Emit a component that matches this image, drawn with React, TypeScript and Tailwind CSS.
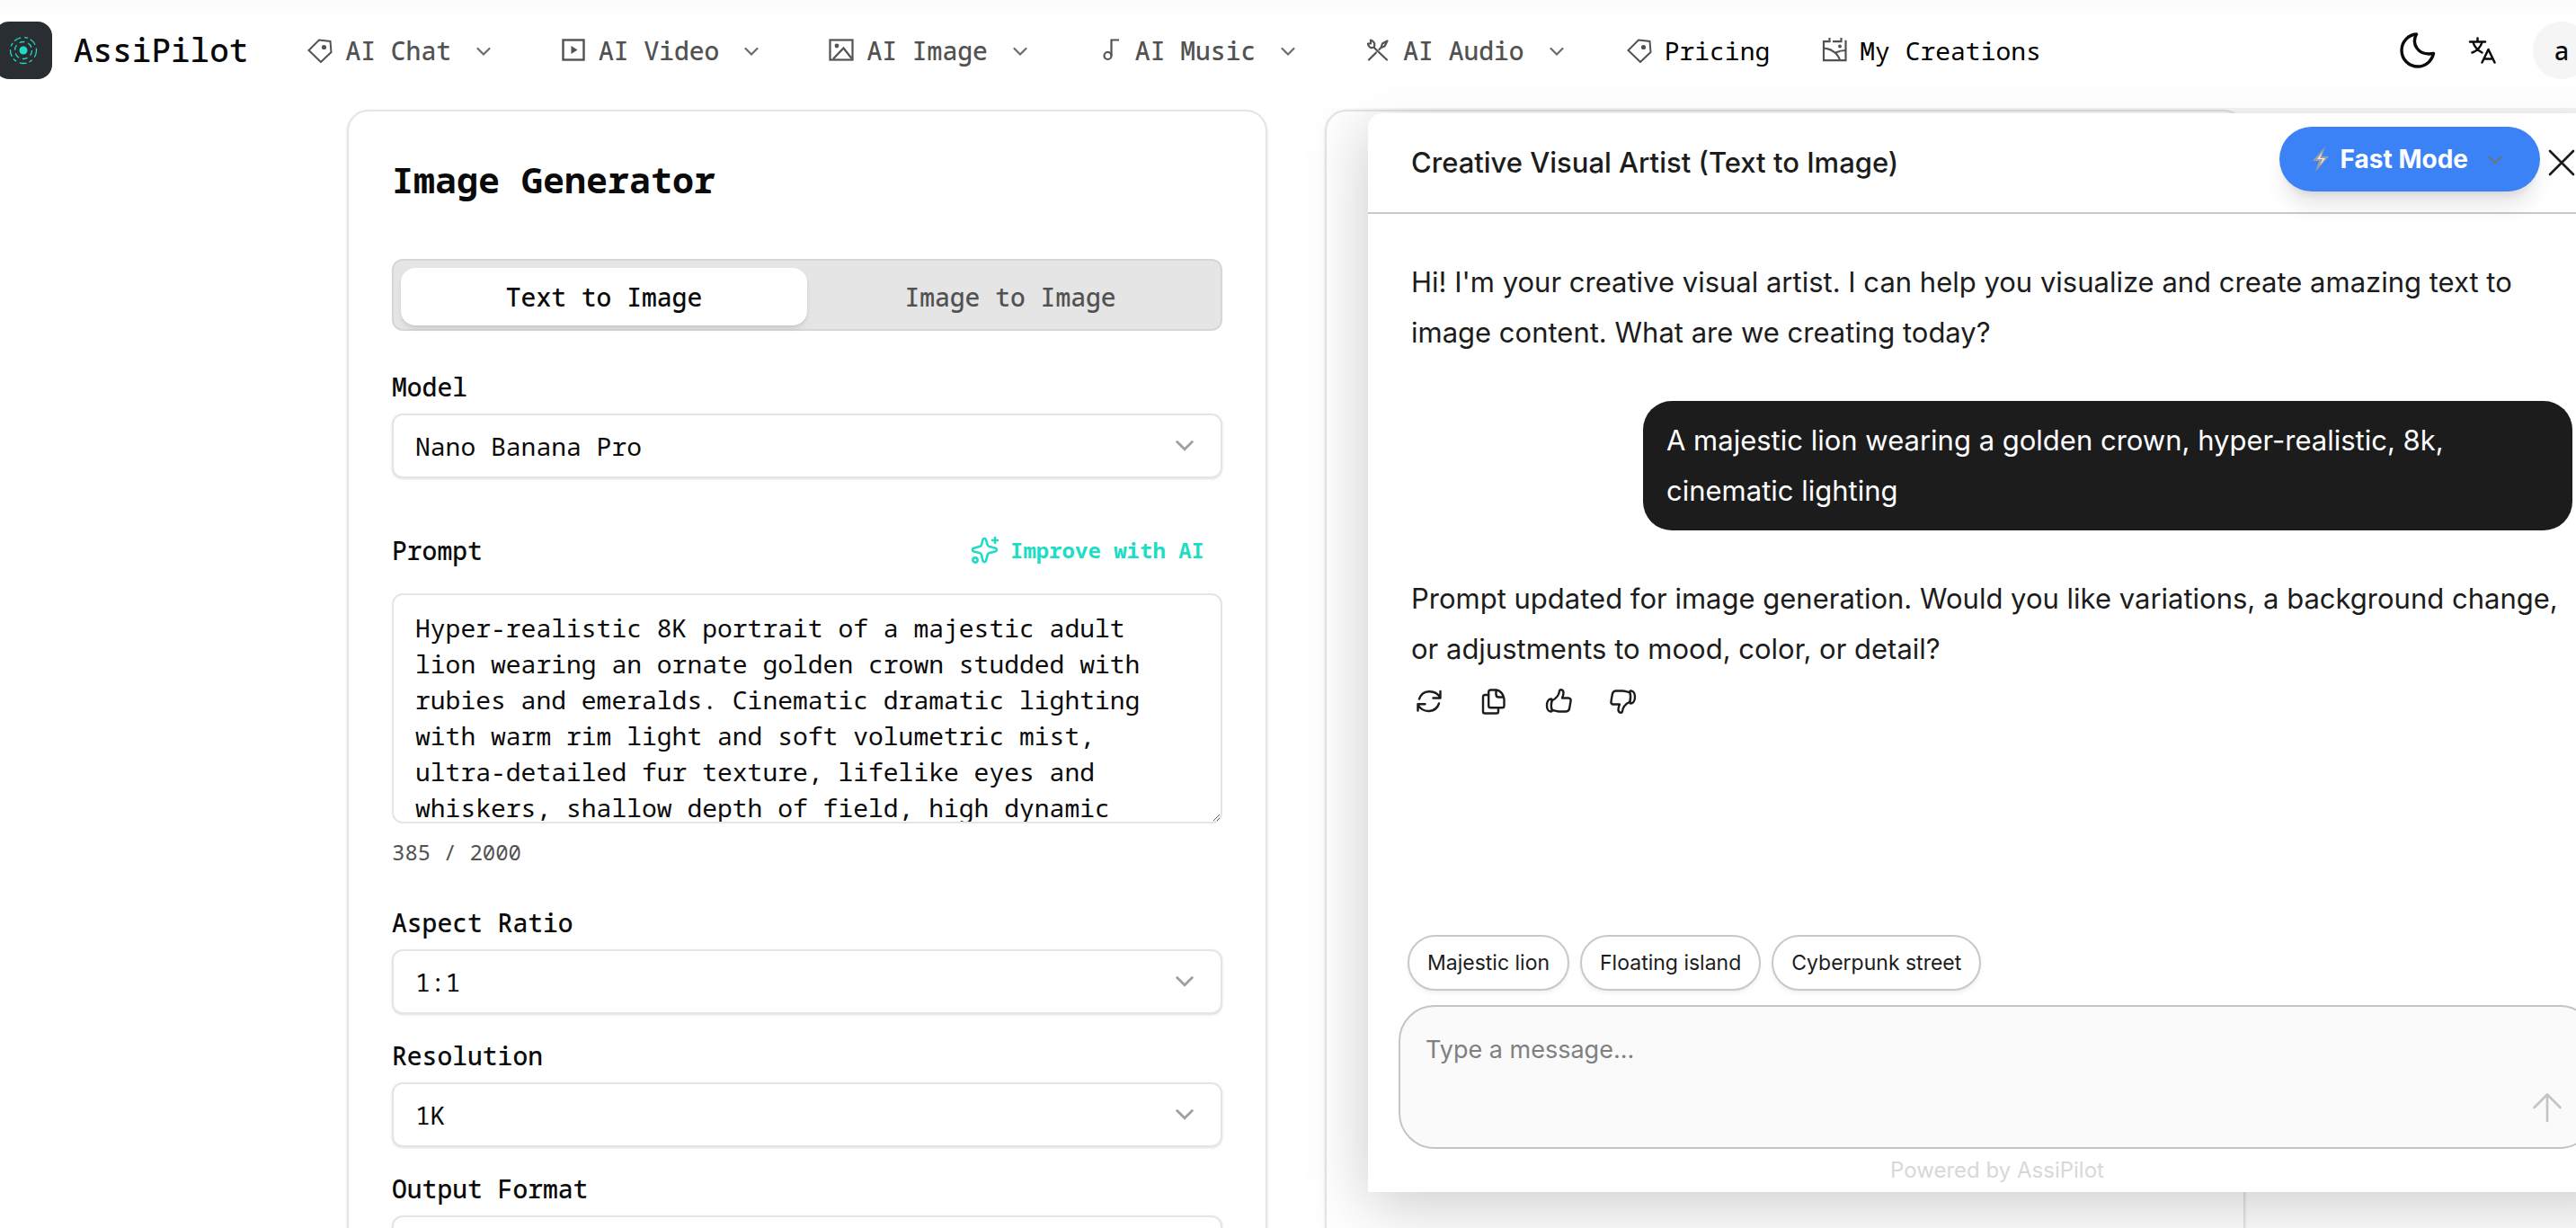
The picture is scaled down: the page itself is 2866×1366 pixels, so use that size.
import React from "react";

type IconProps = { className?: string };

const TagIcon = ({ className = "size-7" }: IconProps) => (
  <svg viewBox="0 0 28 28" fill="none" stroke="currentColor" strokeWidth="2" className={className}>
    <path d="M1.5 14 13 2.500 25.500 4 26.500 16 15 27Z" />
    <circle cx="18.500" cy="10.500" r="2.600" fill="currentColor" stroke="none" />
  </svg>
);

const VideoIcon = () => (
  <svg viewBox="0 0 28 28" fill="none" stroke="currentColor" strokeWidth="2.400" className="size-7">
    <rect x="2.500" y="2.500" width="23" height="22" />
    <path d="M11.500 9v9l7-4.500Z" fill="currentColor" stroke="none" />
  </svg>
);

const PictureIcon = () => (
  <svg viewBox="0 0 28 28" fill="none" stroke="currentColor" strokeWidth="2.200" className="size-7">
    <rect x="1.500" y="2.500" width="25" height="22" />
    <circle cx="9" cy="9" r="2.400" fill="currentColor" stroke="none" />
    <path d="m5 23.500 11.500-12 9 11.500" />
  </svg>
);

const MusicIcon = () => (
  <svg viewBox="0 0 28 28" fill="none" stroke="currentColor" strokeWidth="2.200" className="size-7">
    <path d="M24 2.500h-8.500V20" />
    <circle cx="11.500" cy="20" r="4" />
  </svg>
);

const ToolsIcon = () => (
  <svg viewBox="0 0 28 28" fill="none" stroke="currentColor" strokeWidth="2.200" strokeLinecap="round" strokeLinejoin="round" className="size-7">
    <path d="M6 2.500v4H3c0 3.500 3 5.500 6.500 4.200L24 24.500M9.500 10.700C11.500 7 9.500 3.500 6 2.500" />
    <path d="M24.500 3.500 19 6.500l-1.500 4.500 4-1.500ZM17.500 11l-2 2M12 16.500l-8 8" />
  </svg>
);

const CreationsIcon = () => (
  <svg viewBox="0 0 28 28" fill="none" stroke="currentColor" strokeWidth="2.200" className="size-7">
    <path d="M8.500 0v4.200H2v21h24.500V2.800M12 4.200h9.500V0" />
    <path d="M2 11.500c9 1 16 6 18 13.500M15.500 16.500c3-1.500 6.500-2.500 11-2.500" />
    <circle cx="20" cy="9.500" r="2" fill="currentColor" stroke="none" />
  </svg>
);

const Chevron = ({ className = "size-7" }: IconProps) => (
  <svg viewBox="0 0 28 28" fill="none" stroke="currentColor" strokeWidth="2.200" strokeLinecap="round" className={className} aria-hidden="true">
    <path d="m7.500 12 6.500 6.500 6.500-6.500" />
  </svg>
);

const MoonIcon = () => (
  <svg viewBox="0 0 44 44" fill="none" stroke="currentColor" strokeWidth="3.400" strokeLinejoin="round" className="size-11">
    <path d="M20.500 4C15 14 21 28.500 39.500 25.500 37.500 34 30.500 40 22 40 12 40 4 32 4 22 4 12.500 11.500 4.500 20.500 4Z" />
  </svg>
);

const TranslateIcon = () => (
  <svg viewBox="0 0 32 32" fill="none" stroke="currentColor" strokeWidth="2.500" strokeLinecap="round" strokeLinejoin="round" className="size-8">
    <path d="M2 6.500h17M10.500 2.500v4M5.500 7c1.500 5 5 9 10 11.500M15.500 7C14 12 10 16.500 4.500 18.500M15.500 29.500 22.500 15l7 14.500M18 25.500h9" />
  </svg>
);

const SparklesIcon = () => (
  <svg viewBox="0 0 32 32" fill="none" stroke="currentColor" strokeWidth="2.600" strokeLinecap="round" strokeLinejoin="round" className="size-8">
    <path d="M13.500 4.500c.6-2 3-2 3.600 0l1.400 5.200c.3 1.200 1.200 2.100 2.400 2.400l6.500 1.700c2 .6 2 3 0 3.600l-6.500 1.700c-1.200.3-2.100 1.200-2.400 2.400l-1.400 6.200c-.6 2-3 2-3.600 0l-1.400-6.200c-.3-1.200-1.200-2.100-2.400-2.400l-6.200-1.700c-2-.6-2-3 0-3.600l6.200-1.700c1.200-.3 2.100-1.200 2.400-2.400Z" />
    <path d="M27 2v6M24 5h6" />
    <circle cx="5" cy="27" r="2.600" />
  </svg>
);

const RefreshIcon = () => (
  <svg viewBox="0 0 32 32" fill="none" stroke="currentColor" strokeWidth="2.400" strokeLinecap="round" strokeLinejoin="round" className="size-8">
    <path d="M5 13.500C8.500 3 22.500 2.500 28.500 12M28.500 5v7.500h-8M27 18.500C23.500 29 9.500 30 3.500 20M3.500 26.500v-7.300h8" />
  </svg>
);

const CopyIcon = () => (
  <svg viewBox="0 0 32 32" fill="none" stroke="currentColor" strokeWidth="2.400" strokeLinecap="round" strokeLinejoin="round" className="size-8">
    <path d="M12.500 3.500h6.500c4.500 1 7.500 5 8.500 10V21c0 1.400-.8 2.300-2.300 2.300H12.500c-1.500 0-2.300-.9-2.300-2.300V5.800c0-1.400.8-2.300 2.300-2.300ZM18.500 4v4.500c0 2 1 3 3 3h5" />
    <path d="M10 9H6C4.800 9 4 9.800 4 11v16.500c0 1.200.8 2 2 2h13c1.200 0 2-.8 2-2v-4" />
  </svg>
);

const ThumbIcon = ({ className = "size-8" }: IconProps) => (
  <svg viewBox="0 0 32 32" fill="none" stroke="currentColor" strokeWidth="2.400" strokeLinecap="round" strokeLinejoin="round" className={className}>
    <path d="M8.500 15.500c5-2.500 8-5.500 8.500-11 .5-2 4.500-1.500 4.500 2 0 2-.5 4-1.500 6h7c2 0 3 1.500 2.500 3.500L28 24.500c-.7 2-2 3-4 3h-7c-3 0-5-1-8-1.500" />
    <path d="M7.500 13.500c-6 .5-6 14 0 14 1 0 1.500-.7 1.200-1.500-1.200-3.500-1.200-7 0-11 .3-.8-.2-1.500-1.200-1.500Z" />
  </svg>
);

const CloseIcon = () => (
  <svg viewBox="0 0 32 32" fill="none" stroke="currentColor" strokeWidth="2.600" strokeLinecap="round" className="size-8">
    <path d="m3 3 26 26M29 3 3 29" />
  </svg>
);

const ArrowUpIcon = () => (
  <svg viewBox="0 0 36 36" fill="none" stroke="currentColor" strokeWidth="2.600" strokeLinecap="round" strokeLinejoin="round" className="size-9">
    <path d="M18 33V4M3.500 18 18 3.500 32.500 18" />
  </svg>
);

const Logo = () => (
  <svg viewBox="0 0 64 64" className="size-16 -ml-1.5 shrink-0" role="img" aria-label="AssiPilot logo">
    <rect width="64" height="64" rx="16" fill="#2a2d31" />
    <circle cx="32" cy="32" r="4.500" fill="#1fdcc4" />
    <g fill="none" stroke="#1fdcc4" strokeWidth="1.300">
      <circle cx="32" cy="32" r="9.500" strokeDasharray="6 4" />
      <circle cx="32" cy="32" r="14.500" strokeDasharray="8 4 4 3" />
    </g>
  </svg>
);

const menus = [
  { label: "AI Chat", icon: <TagIcon /> },
  { label: "AI Video", icon: <VideoIcon /> },
  { label: "AI Image", icon: <PictureIcon /> },
  { label: "AI Music", icon: <MusicIcon /> },
  { label: "AI Audio", icon: <ToolsIcon /> },
];

const links = [
  { label: "Pricing", icon: <TagIcon /> },
  { label: "My Creations", icon: <CreationsIcon /> },
];

function Header() {
  return (
    <header className="relative z-20 flex h-[120px] shrink-0 items-center bg-linear-to-b from-neutral-50/90 to-white/80 to-20% pb-2">
      <Logo />
      <a href="#" className="ml-6 text-[36px] leading-[48px] font-medium">AssiPilot</a>
      <nav className="ml-[66px] flex items-center text-[28px] leading-10 whitespace-nowrap">
        <div className="flex items-center gap-[72px] text-[#525252]">
          {menus.map((m) => (
            <button key={m.label} type="button" className="flex items-center font-medium">
              {m.icon}
              <span className="mr-[22px] ml-3.5">{m.label}</span>
              <Chevron className="size-7 text-[#6b6b6b]" />
            </button>
          ))}
        </div>
        <div className="ml-16 flex items-center gap-[58px]">
          {links.map((l) => (
            <a key={l.label} href="#" className="flex items-center gap-3.5 text-black">
              <span className="text-[#525252]">{l.icon}</span>
              {l.label}
            </a>
          ))}
        </div>
      </nav>
      <div className="-mr-4 ml-auto flex shrink-0 items-center">
        <button type="button" aria-label="Dark mode"><MoonIcon /></button>
        <button type="button" aria-label="Language" className="mr-10 ml-[34px]"><TranslateIcon /></button>
        <button type="button" className="size-16 rounded-full bg-neutral-100 text-[28px] font-medium">a</button>
      </div>
    </header>
  );
}

function SelectField({ id, label, options }: { id: string; label: string; options: string[] }) {
  return (
    <div>
      <label htmlFor={id} className="mb-2.5 block font-medium">{label}</label>
      <div className="relative">
        <select id={id} className="h-[72px] w-full appearance-none rounded-xl border-2 border-[#e5e5e5] bg-white px-6 shadow-sm">
          {options.map((o) => <option key={o}>{o}</option>)}
        </select>
        <Chevron className="pointer-events-none absolute top-4 right-6 size-9 text-[#a0a0a0]" />
      </div>
    </div>
  );
}

const promptText =
  "Hyper-realistic 8K portrait of a majestic adult lion wearing an ornate golden crown studded with rubies and emeralds. Cinematic dramatic lighting with warm rim light and soft volumetric mist, ultra-detailed fur texture, lifelike eyes and whiskers, shallow depth of field, high dynamic";

function GeneratorCard() {
  return (
    <section className="rounded-3xl border-2 border-[#e5e5e5] bg-white px-12 pt-[52px] pb-12 text-[28px] leading-10 shadow-sm">
      <h1 className="text-[40px] leading-[48px] font-bold">Image Generator</h1>
      <div role="tablist" className="mt-16 grid h-20 grid-cols-2 rounded-xl border-2 border-[#d6d6d6] bg-[#e5e5e5] p-2 pb-1">
        <button role="tab" aria-selected="true" type="button" className="rounded-2xl bg-white font-medium shadow-md">Text to Image</button>
        <button role="tab" aria-selected="false" type="button" className="font-medium text-[#525252]">Image to Image</button>
      </div>
      <div className="mt-[42px]">
        <SelectField id="model" label="Model" options={["Nano Banana Pro"]} />
      </div>
      <div className="mt-[60px] flex items-center justify-between">
        <label htmlFor="prompt" className="font-medium">Prompt</label>
        <button type="button" className="mr-5 flex items-center gap-3 text-2xl font-bold text-[#1fdcc4]">
          <SparklesIcon />
          Improve with AI
        </button>
      </div>
      <textarea
        id="prompt"
        defaultValue={promptText}
        className="mt-7 block h-64 w-full resize-y overflow-hidden rounded-xl border-2 border-[#e5e5e5] bg-white px-6 py-4"
      />
      <p className="mt-3.5 text-2xl leading-9 text-[#525252]">385 / 2000</p>
      <div className="mt-10 flex flex-col gap-[26px]">
        <SelectField id="ratio" label="Aspect Ratio" options={["1:1"]} />
        <SelectField id="resolution" label="Resolution" options={["1K"]} />
        <SelectField id="format" label="Output Format" options={["PNG"]} />
      </div>
    </section>
  );
}

const chips = ["Majestic lion", "Floating island", "Cyberpunk street"];

function ChatPanel() {
  return (
    <aside className="absolute top-[126px] -right-14 z-10 flex h-[1200px] w-[1400px] flex-col rounded-t-2xl bg-white font-['Inter',sans-serif] text-[#1c1c1c] shadow-[0_12px_72px_rgba(0,0,0,0.22)]">
      <div className="flex h-28 shrink-0 items-center border-b-2 border-[#c8c8c8] pl-12">
        <h2 className="text-[31px] leading-10 font-medium">Creative Visual Artist (Text to Image)</h2>
        <button type="button" className="mr-2 mb-2 ml-auto flex h-[72px] items-center rounded-full bg-[#3b82f6] px-9 text-[28px] font-bold text-white shadow-xl">
          <svg viewBox="0 0 20 28" className="mr-3 h-7 w-5" aria-hidden="true">
            <path d="M15 0 1 16h7L4 28l15-17h-8Z" fill="#9aa0a6" />
            <path d="m12 6-6 8h6l-3 7 6-8H9Z" fill="#f3e9e0" />
          </svg>
          Fast Mode
          <Chevron className="ml-4 size-7 text-[#6b7280]" />
        </button>
        <button type="button" aria-label="Close" className="mr-14"><CloseIcon /></button>
      </div>
      <div className="flex flex-1 flex-col gap-12 pt-12 pr-[60px] pl-12 text-[31px] leading-[56px]">
        <p className="pr-10">Hi! I'm your creative visual artist. I can help you visualize and create amazing text to image content. What are we creating today?</p>
        <p className="w-[1034px] self-end rounded-[32px] bg-[#1c1c1c] py-4 pr-16 pl-[26px] text-white">
          A majestic lion wearing a golden crown, hyper-realistic, 8k, cinematic lighting
        </p>
        <div>
          <p>Prompt updated for image generation. Would you like variations, a background change, or adjustments to mood, color, or detail?</p>
          <div className="mt-3.5 ml-1 flex gap-10">
            <button type="button" aria-label="Regenerate"><RefreshIcon /></button>
            <button type="button" aria-label="Copy"><CopyIcon /></button>
            <button type="button" aria-label="Good response"><ThumbIcon /></button>
            <button type="button" aria-label="Bad response"><ThumbIcon className="size-8 rotate-180" /></button>
          </div>
        </div>
      </div>
      <div className="px-[34px]">
        <div className="ml-2.5 flex gap-3">
          {chips.map((c) => (
            <button key={c} type="button" className="h-[62px] rounded-full border-2 border-[#c8c8c8] bg-white px-5 text-[23px] shadow-md shadow-black/5">{c}</button>
          ))}
        </div>
        <div className="relative mt-4">
          <textarea
            aria-label="Message"
            placeholder="Type a message..."
            className="block h-40 w-full resize-none overflow-hidden rounded-[40px] border-2 border-[#c4c4c4] bg-[#fafafa] px-7 py-7 text-[27px] leading-10 placeholder:text-[#808080]"
          />
          <button type="button" aria-label="Send" className="absolute right-9 bottom-7 text-[#c4c4c4]"><ArrowUpIcon /></button>
        </div>
      </div>
      <p className="py-1.5 text-center text-2xl leading-9 text-[#d8d8d8]">Powered by AssiPilot</p>
    </aside>
  );
}

export default function App() {
  return (
    <div className="relative flex h-screen flex-col overflow-hidden bg-white font-['Noto_Sans_Mono','DejaVu_Sans_Mono',monospace] text-[#0a0a0a]">
      <Header />
      <main className="mt-0.5 grid grid-cols-2 gap-16 pr-[368px] pl-[386px]">
        <GeneratorCard />
        <section aria-label="Result" className="rounded-3xl border-2 border-[#e5e5e5] bg-white shadow-sm" />
      </main>
      <ChatPanel />
    </div>
  );
}
